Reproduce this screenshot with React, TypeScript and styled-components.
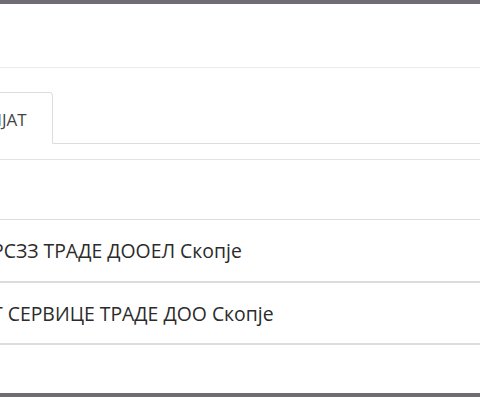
import React from 'react';
import styled, {createGlobalStyle} from "styled-components";

const GlobalStyle = createGlobalStyle`
  html, body {
    margin: 0;
    padding: 0;
    background: #fff;
  }

  body {
    font-family: "Open Sans", "Noto Sans", sans-serif;
    color: #333;
    overflow: hidden;
  }
`

const companies = [
    {name: 'РСЗЗ ТРАДЕ ДООЕЛ Скопје', border: 1},
    {name: 'Т СЕРВИЦЕ ТРАДЕ ДОО Скопје', border: 2},
]

export default function App() {
    return (
        <>
            <GlobalStyle/>
            <Frame>
                <Header/>
                <TabsSection>
                    <TabNav>
                        <Tab>ИЈАТ</Tab>
                    </TabNav>
                </TabsSection>
                <List>
                    {companies.map((c, i) => (
                        <Row key={i} $border={c.border} $last={i === companies.length - 1}>
                            <RowLabel>{c.name}</RowLabel>
                        </Row>
                    ))}
                </List>
            </Frame>
        </>
    );
}

const Frame = styled.div`
  width: 480px;
  height: 397px;
  box-sizing: border-box;
  border-top: 4px solid #6f6c72;
  border-bottom: 4px solid #6f6c72;
  display: flex;
  flex-direction: column;
  overflow: hidden;
`

const Header = styled.div`
  height: 63px;
  border-bottom: 1px solid #ebebeb;
  flex-shrink: 0;
`

const TabsSection = styled.div`
  padding-top: 24px;
  padding-bottom: 15px;
  border-bottom: 1px solid #e3e3e3;
`

const TabNav = styled.div`
  display: flex;
  border-bottom: 1px solid #dddddd;
  height: 51px;
`

const Tab = styled.div`
  margin-left: -11px;
  margin-bottom: -1px;
  padding: 2px 25px 0 0;
  border: 1px solid #dddddd;
  border-left: none;
  border-bottom-color: #fff;
  border-radius: 0 4px 0 0;
  background: #fff;
  display: flex;
  align-items: center;
  font-size: 17px;
  color: #444;
`

const List = styled.div`
  margin-top: 59px;
`

const Row = styled.div<{ $border: number; $last: boolean }>`
  height: ${p => p.$border === 1 ? 61 : 60}px;
  border-top: ${p => p.$border}px solid #dcdcdc;
  border-bottom: ${p => p.$last ? '2px solid #dcdcdc' : 'none'};
  display: flex;
  align-items: center;
`

const RowLabel = styled.span`
  margin-left: -8px;
  font-size: 19.4px;
  color: #2b2b2b;
  white-space: nowrap;
`
